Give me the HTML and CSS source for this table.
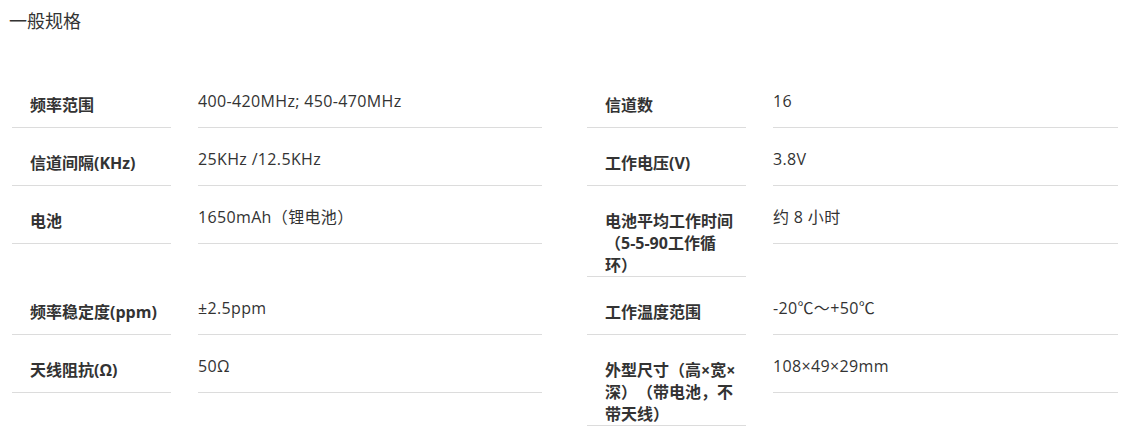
FILE: index.html
```html
<!DOCTYPE html>
<html lang="zh-CN">
<head>
<meta charset="utf-8">
<title>一般规格</title>
<link rel="stylesheet" href="styles.css">
</head>
<body>
<h2 class="title">一般规格</h2>
<div class="spec-grid">
  <div class="spec-item">
    <div class="spec-label">频率范围</div>
    <div class="spec-value">400-420MHz; 450-470MHz</div>
  </div>
  <div class="spec-item">
    <div class="spec-label">信道数</div>
    <div class="spec-value">16</div>
  </div>
  <div class="spec-item">
    <div class="spec-label">信道间隔(KHz)</div>
    <div class="spec-value">25KHz /12.5KHz</div>
  </div>
  <div class="spec-item">
    <div class="spec-label">工作电压(V)</div>
    <div class="spec-value">3.8V</div>
  </div>
  <div class="spec-item">
    <div class="spec-label">电池</div>
    <div class="spec-value">1650mAh（锂电池）</div>
  </div>
  <div class="spec-item">
    <div class="spec-label">电池平均工作时间（5-5-90工作循环）</div>
    <div class="spec-value">约 8 小时</div>
  </div>
  <div class="spec-item">
    <div class="spec-label">频率稳定度(ppm)</div>
    <div class="spec-value">±2.5ppm</div>
  </div>
  <div class="spec-item">
    <div class="spec-label">工作温度范围</div>
    <div class="spec-value">-20℃～+50℃</div>
  </div>
  <div class="spec-item">
    <div class="spec-label">天线阻抗(Ω)</div>
    <div class="spec-value">50Ω</div>
  </div>
  <div class="spec-item">
    <div class="spec-label">外型尺寸（高×宽×深）（带电池，不带天线）</div>
    <div class="spec-value">108×49×29mm</div>
  </div>
</div>
</body>
</html>
```
FILE: styles.css
```css
html, body {
  margin: 0;
  padding: 0;
  background: #fff;
}
body {
  padding: 8px;
  color: #333;
  font-family: "Open Sans", "Noto Sans CJK SC", sans-serif;
  text-spacing-trim: space-all;
}
.title {
  margin: 0;
  padding-left: 1px;
  font-family: "Noto Sans CJK SC", sans-serif;
  font-size: 18px;
  font-weight: 400;
  line-height: 24px;
  color: #333;
}
.spec-grid {
  margin-top: 38px;
  padding-left: 4px;
  display: grid;
  grid-template-columns: 530px 531px;
  column-gap: 45px;
  align-items: start;
}
.spec-item {
  display: flex;
  align-items: flex-start;
  gap: 27px;
}
.spec-label {
  box-sizing: border-box;
  flex: 0 0 159px;
  min-height: 58px;
  padding: 24px 0 0 18px;
  border-bottom: 1px solid #dcdcdc;
  font-family: "Open Sans", "Noto Sans CJK SC", sans-serif;
  font-size: 16px;
  font-weight: 700;
  line-height: 22px;
  color: #333;
}
.spec-value {
  box-sizing: border-box;
  flex: 1 1 auto;
  min-height: 58px;
  padding: 20px 0 0 0;
  border-bottom: 1px solid #dcdcdc;
  font-size: 16px;
  line-height: 22px;
  letter-spacing: 0.35px;
  color: #333;
}
```
